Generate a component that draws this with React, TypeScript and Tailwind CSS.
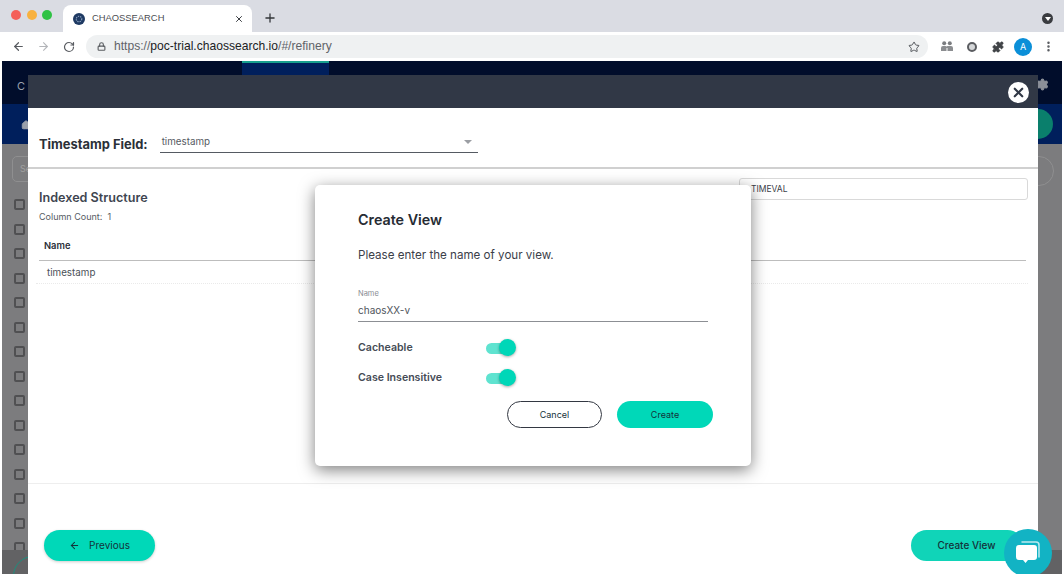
import React from "react";
import { ArrowLeft, ArrowRight, RotateCw, Lock, Star, Puzzle, MoreVertical, X, Plus, Settings, Home } from "lucide-react";

function Toggle() {
  return (
    <div className="relative h-[20px] w-[30px]">
      <div className="absolute left-0 top-[5px] h-[11px] w-[26px] rounded-full bg-[#5fe3d0]" />
      <div className="absolute right-0 top-[1px] h-[17px] w-[17px] rounded-full bg-[#00d7b8] shadow-[0_1px_3px_rgba(0,0,0,0.35)]" />
    </div>
  );
}

function Pill({ children, className }: { children: React.ReactNode; className: string }) {
  return <div className={"flex items-center justify-center rounded-full text-[#14323a] " + className}>{children}</div>;
}

export default function App() {
  const boxes = Array.from({ length: 15 });
  return (
    <div className="flex h-[588px] w-[1064px] flex-col overflow-hidden bg-white" style={{ fontFamily: "Inter, sans-serif" }}>
      {/* tab strip */}
      <div className="flex h-[32px] shrink-0 items-end bg-[#dadce3] pl-[11px] pr-[11px]">
        <div className="flex h-[32px] items-center gap-[5.5px] self-start pb-[2px]">
          <span className="h-[10px] w-[10px] rounded-full bg-[#f4605a]" />
          <span className="h-[10px] w-[10px] rounded-full bg-[#f8b13f]" />
          <span className="h-[10px] w-[10px] rounded-full bg-[#2fc244]" />
        </div>
        <div className="ml-[11px] flex h-[27px] w-[189px] items-center rounded-t-[8px] bg-white pl-[10px] pr-[7px]">
          <svg width="12" height="12" viewBox="0 0 13 13">
            <circle cx="6.5" cy="6.5" r="6.5" fill="#1f3a63" />
            <circle cx="6.5" cy="6.5" r="3" fill="none" stroke="#8da3c2" strokeWidth="1.2" strokeDasharray="1.5 1" />
          </svg>
          <span className="ml-[7px] text-[9.4px] text-[#4b4d52]" style={{ fontFamily: "'Liberation Sans', sans-serif" }}>CHAOSSEARCH</span>
          <X className="ml-auto text-[#3c3f44] mr-[1px]" size={10} strokeWidth={2.4} />
        </div>
        <Plus className="mb-[7px] ml-[11px] text-[#33363a]" size={14} strokeWidth={2.2} />
        <div className="mb-[8px] ml-auto flex h-[11px] w-[11px] items-center justify-center self-end rounded-full bg-[#3a3c40]">
          <span className="mt-[1px] h-0 w-0 border-x-[3px] border-t-[4px] border-x-transparent border-t-white" />
        </div>
      </div>
      {/* toolbar */}
      <div className="flex h-[29px] shrink-0 items-center bg-white pl-[12px]">
        <ArrowLeft size={13} strokeWidth={2.2} className="text-[#585b60]" />
        <ArrowRight size={13} strokeWidth={2} className="ml-[12px] text-[#b3b5b9]" />
        <RotateCw size={12} strokeWidth={2.4} className="ml-[13px] text-[#585b60]" />
        <div className="ml-[11px] flex h-[23px] w-[842px] items-center rounded-full bg-[#eff1f2] pl-[11px] pr-[8px]">
          <Lock size={9} strokeWidth={3} className="text-[#5b5e62]" />
          <span className="ml-[8px] text-[12.1px] text-[#5f6368]" style={{ fontFamily: "'Liberation Sans', sans-serif" }}>
            https://<span className="text-[#202124]">poc-trial.chaossearch.io</span>/#/refinery
          </span>
          <Star size={12} strokeWidth={2} className="ml-auto text-[#54575c]" />
        </div>
        <svg width="12" height="11" viewBox="0 0 12 11" className="ml-[13px]">
          <circle cx="3.2" cy="2.2" r="2" fill="#7b7d80" />
          <circle cx="8.8" cy="2.2" r="2" fill="#7b7d80" />
          <path d="M0 10V7a2 2 0 0 1 2-2h2.4a2 2 0 0 1 1.1.4A2 2 0 0 1 6.6 5H10a2 2 0 0 1 2 2v3H6.5V7h-1v3z" fill="#8b8d90" />
        </svg>
        <span className="ml-[14px] h-[10px] w-[10px] rounded-full border-[2px] border-[#5b5d61] bg-[#d5d7d9]" />
        <Puzzle size={12} fill="#3f4246" strokeWidth={2} className="ml-[15px] text-[#3f4246]" />
        <div className="ml-[10px] flex h-[18px] w-[18px] items-center justify-center rounded-full bg-[#0b8fd8] text-[9px] text-white">A</div>
        <MoreVertical size={13} strokeWidth={2.6} className="ml-[10px] text-[#54575c]" />
      </div>
      {/* page */}
      <div className="relative ml-[2px] mr-[2px] flex h-[513px] shrink-0 flex-col overflow-hidden bg-[#7c7c7e]">
        <div className="flex h-[43px] shrink-0 items-start bg-[#010d2b] pl-[15px]">
          <span className="pt-[17px] text-[11px] text-[#9aa0ab]">C</span>
          <div className="ml-[217px] h-[14px] w-[87px] border-t-[2px] border-[#18a08e] bg-[#001f5c]" />
          <Settings size={13} fill="#8b8f98" className="ml-auto mr-[13px] mt-[17px] text-[#8b8f98]" />
        </div>
        <div className="flex h-[40px] shrink-0 items-center justify-between bg-[#001f5c] pl-[19px] pr-[9px]">
          <Home size={10} fill="#9aa0ab" className="mt-[2px] text-[#9aa0ab]" />
          <div className="h-[30px] w-[34px] rounded-full bg-[#0a7f6c]" />
        </div>
        <div className="flex flex-1 flex-col">
          <div className="flex items-start justify-between pt-[12px]">
            <div className="ml-[10px] flex h-[26px] w-[40px] items-center rounded-[5px] border border-[#8f8f90] pl-[7px] text-[9px] text-[#a0a0a0]">Se</div>
            <div className="mr-[8px] h-[30px] w-[40px] rounded-full border border-[#8f8f90]" />
          </div>
          <div className="mt-[13px] flex flex-col gap-[13.5px] pl-[12px]">
            {boxes.map((_, i) => (
              <span key={i} className="h-[11px] w-[11px] rounded-[2px] border-2 border-[#505052]" />
            ))}
          </div>
        </div>
        <div className="absolute inset-x-0 bottom-0 h-[24px] bg-[#626264]" />
        <div className="absolute bottom-[-22px] left-[11px] h-[40px] w-[40px] rounded-full border border-[#1c8f7e]" />
        {/* wizard window */}
        <div className="absolute bottom-0 left-[26px] top-[14px] flex w-[1010px] flex-col bg-white">
          <div className="flex h-[33px] shrink-0 items-center justify-end bg-[#313846] pr-[9px]">
            <div className="mt-[1px] flex h-[21px] w-[21px] items-center justify-center rounded-full bg-white">
              <X size={15} strokeWidth={3.4} className="text-[#313846]" />
            </div>
          </div>
          <div className="flex h-[61px] shrink-0 items-start border-b-[2px] border-[#d0d0d0] pl-[11px] pt-[22px]">
            <span className="pt-[6px] text-[12.9px] font-bold leading-[18px] text-[#2b3038]">Timestamp Field:</span>
            <div className="ml-[12px] flex h-[23px] w-[318px] items-start justify-between border-b border-[#555a62] pl-[2px] pt-[5px]">
              <span className="text-[9.8px] leading-[14px] text-[#555a62]">timestamp</span>
              <span className="mr-[6px] mt-[5px] h-0 w-0 border-x-[4px] border-t-[4px] border-x-transparent border-t-[#9b9ea3]" />
            </div>
          </div>
          <div className="flex flex-1 flex-col">
            <div className="flex justify-between pl-[11px] pr-[10px] pt-[9px]">
              <div className="flex-1">
                <div className="pt-[12px] text-[12.6px] font-semibold leading-[16px] text-[#3e4550]">Indexed Structure</div>
                <div className="mt-[4px] text-[9px] leading-[13px] text-[#565b63]">Column Count:&nbsp; 1</div>
              </div>
              <div className="flex h-[22px] w-[289px] items-center rounded-[3px] border border-[#d9d9d9] pl-[11px] text-[8.5px] text-[#3c4048]">TIMEVAL</div>
            </div>
            <div className="ml-[11px] mt-[10px] flex h-[28px] w-[987px] items-center border-b border-[#bdbdbd] pl-[5px] text-[9.4px] font-semibold text-[#2b3038]">Name</div>
            <div className="ml-[8px] mr-[10px] flex h-[23px] items-center border-b border-dotted border-[#eaeaea] pl-[11px] pt-[3px] text-[9.8px] text-[#4a4f57]">timestamp</div>
          </div>
          <div className="flex h-[91px] shrink-0 items-start justify-between border-t border-[#eeeeee] pl-[16px] pr-[15px] pt-[46px]">
            <Pill className="h-[31px] w-[111px] gap-[9px] bg-[#00d8b8] text-[10px] shadow-[0_1px_3px_rgba(0,0,0,0.2)]">
              <ArrowLeft size={11} strokeWidth={2.2} />
              Previous
            </Pill>
            <Pill className="h-[31px] w-[112px] bg-[#10d4b8] pr-[1px] text-[10px] font-medium">Create View</Pill>
          </div>
        </div>
        {/* chat bubble */}
        <div className="absolute bottom-[-3px] left-[1002px] flex h-[48px] w-[48px] items-center justify-center rounded-full bg-[#12b3c4]">
          <svg width="26" height="24" viewBox="0 0 26 24">
            <path d="M7 1h14a3 3 0 0 1 3 3v12" fill="none" stroke="#bdeaf0" strokeWidth="1.5" strokeLinecap="round" />
            <path d="M4 4h15a3 3 0 0 1 3 3v9a3 3 0 0 1-3 3h-6l-2.5 3-2.5-3H4a3 3 0 0 1-3-3V7a3 3 0 0 1 3-3z" fill="#fff" />
          </svg>
        </div>
        {/* dialog */}
        <div className="absolute left-[313px] top-[124px] flex h-[281px] w-[436px] flex-col rounded-[5px] bg-white pl-[43px] pr-[38px] pt-[25px] shadow-[0_4px_16px_rgba(0,0,0,0.5)]">
          <div className="text-[14.3px] font-semibold leading-[20px] text-[#262b33]">Create View</div>
          <div className="mt-[17px] text-[11.6px] leading-[16px] text-[#3b4049]">Please enter the name of your view.</div>
          <div className="mt-[26px] text-[7.5px] leading-[9px] text-[#8a8e94]">Name</div>
          <div className="mr-[5px] mt-[5px] h-[19px] border-b border-[#8c8f94] text-[10px] leading-[14px] text-[#50555c]">chaosXX-v</div>
          <div className="mt-[16px] flex h-[20px] items-center">
            <span className="w-[128px] text-[10.6px] font-semibold text-[#454b55]">Cacheable</span>
            <Toggle />
          </div>
          <div className="mt-[10px] flex h-[20px] items-center">
            <span className="w-[128px] text-[10.6px] font-semibold text-[#454b55]">Case Insensitive</span>
            <Toggle />
          </div>
          <div className="mt-[13px] flex justify-end gap-[15px]">
            <Pill className="h-[27px] w-[95px] border border-[#333842] bg-white text-[9px] text-[#3b4049]">Cancel</Pill>
            <Pill className="h-[27px] w-[96px] bg-[#00d8b8] text-[9px]">Create</Pill>
          </div>
        </div>
      </div>
    </div>
  );
}
